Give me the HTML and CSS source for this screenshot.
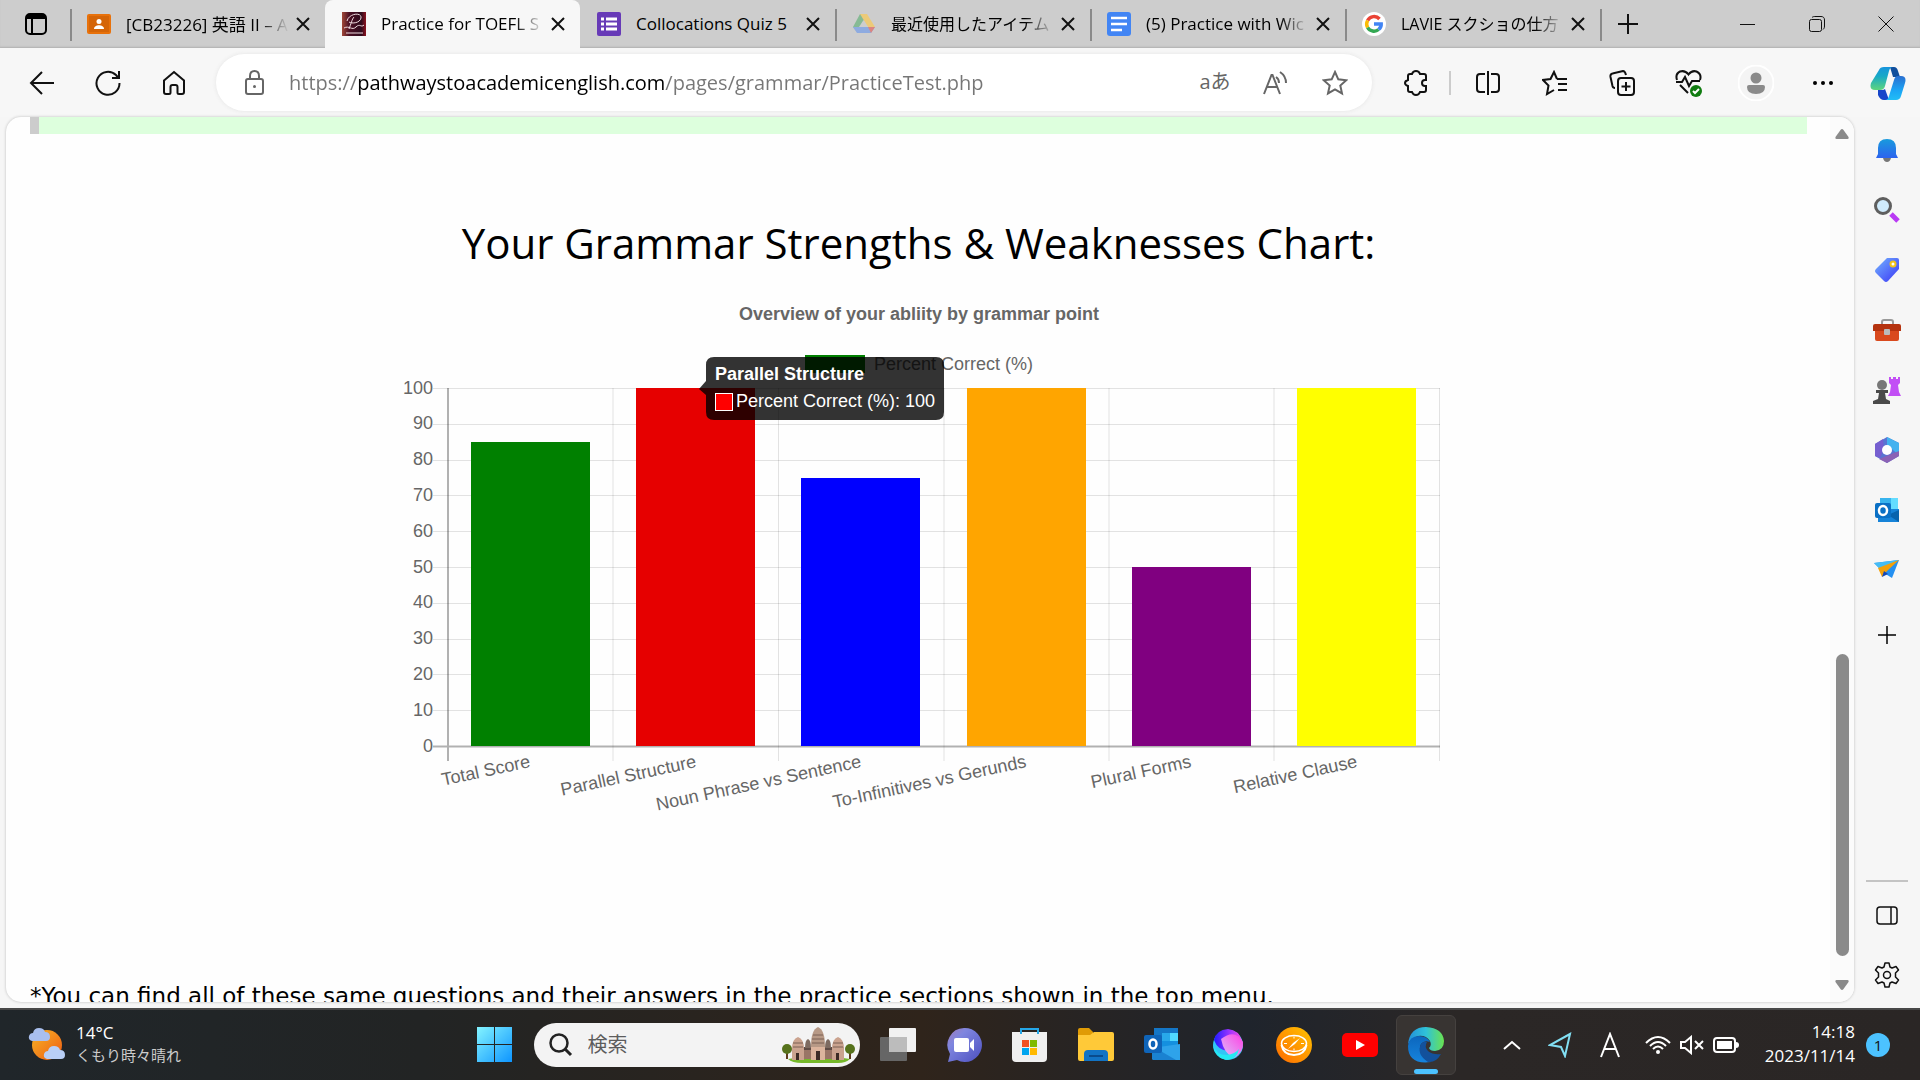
FILE: index.html
```html
<!DOCTYPE html>
<html lang="ja">
<head>
<meta charset="utf-8">
<title>Practice for TOEFL</title>
<link rel="stylesheet" href="styles.css">
</head>
<body>
<header class="tabbar">
  <button class="tab-actions" aria-label="Tab actions"><svg width="22" height="22" viewBox="0 0 22 22"><rect x="1" y="1" width="20" height="20" rx="4" fill="none" stroke="#000" stroke-width="2"/><path d="M1 6V5a4 4 0 0 1 4-4h12a4 4 0 0 1 4 4v1z"/><path d="M7 6v15" stroke="#000" stroke-width="2"/></svg></button>
  <nav class="tabs">
    <div class="tab">
      <svg width="24" height="24" viewBox="0 0 24 24"><rect y="2" width="24" height="20" rx="2" fill="#e8710a"/><rect x="2" y="4" width="20" height="16" fill="#d56507"/><circle cx="12" cy="9.500" r="2.500" fill="#fff"/><path d="M7 17c0-5 10-5 10 0z" fill="#fff"/></svg>
      <button class="tab-title">[CB23226] 英語 II – A</button>
      <button class="close" aria-label="Close tab"><svg width="14" height="14" viewBox="0 0 14 14"><path d="M1 1l12 12M13 1L1 13"/></svg></button>
    </div>
    <div class="tab active">
      <svg width="24" height="24" viewBox="0 0 24 24"><defs><linearGradient id="fav"><stop stop-color="#a14838"/><stop offset=".3" stop-color="#4b1024"/><stop offset=".8" stop-color="#2e0b1d"/><stop offset="1" stop-color="#8c1320"/></linearGradient></defs><rect width="24" height="24" fill="url(#fav)"/><path d="M7 17C9 12 10 7 12 5M5 9C7 1 20 0 19 6c-1 5-9 6-12 4M2 16c5-3 8 3 12-1s5 1 8-2M4 21h17" fill="none" stroke="#efdce0"/></svg>
      <button class="tab-title">Practice for TOEFL S</button>
      <button class="close" aria-label="Close tab"><svg width="14" height="14" viewBox="0 0 14 14"><path d="M1 1l12 12M13 1L1 13"/></svg></button>
    </div>
    <div class="tab">
      <svg width="24" height="24" viewBox="0 0 24 24"><rect width="24" height="24" rx="2" fill="#673ab7"/><path d="M4 7h3M4 12h3M4 17h3M9 7h11M9 12h11M9 17h11" stroke="#fff" stroke-width="3"/></svg>
      <button class="tab-title">Collocations Quiz 5</button>
      <button class="close" aria-label="Close tab"><svg width="14" height="14" viewBox="0 0 14 14"><path d="M1 1l12 12M13 1L1 13"/></svg></button>
    </div>
    <div class="tab">
      <svg width="24" height="24" viewBox="0 0 24 24"><path d="M8 2h7L6 21l-5-6z" fill="#86ba94"/><path d="M8 2h7l8 13h-7z" fill="#ecca78"/><path d="M1 15h22l-4 6H5z" fill="#8eabe0"/><path d="M16 15h7l-4 6z" fill="#dc8580"/><path d="M11.500 8L16 15H7z" fill="#cdcdcd"/></svg>
      <button class="tab-title kana">最近使用したアイテム</button>
      <button class="close" aria-label="Close tab"><svg width="14" height="14" viewBox="0 0 14 14"><path d="M1 1l12 12M13 1L1 13"/></svg></button>
    </div>
    <div class="tab">
      <svg width="24" height="24" viewBox="0 0 24 24"><rect width="24" height="24" rx="3" fill="#4285f4"/><path d="M4 6h16M4 12h16M4 18h11" stroke="#fff" stroke-width="2.500"/></svg>
      <button class="tab-title">(5) Practice with Wic</button>
      <button class="close" aria-label="Close tab"><svg width="14" height="14" viewBox="0 0 14 14"><path d="M1 1l12 12M13 1L1 13"/></svg></button>
    </div>
    <div class="tab">
      <svg width="24" height="24" viewBox="0 0 24 24"><circle cx="12" cy="12" r="12" fill="#fff"/><g fill="none" stroke-width="3.500"><path d="M17.500 7A7.300 7.300 0 0 0 5.600 8.500" stroke="#ea4335"/><path d="M5.600 8.500a7.300 7.300 0 0 0 0 7" stroke="#fbbc05"/><path d="M5.600 15.500a7.300 7.300 0 0 0 11 2" stroke="#34a853"/><path d="M16.600 17.500c2-1.700 2.700-3.500 2.600-5.500H12" stroke="#4285f4"/></g></svg>
      <button class="tab-title kana">LAVIE スクショの仕方</button>
      <button class="close" aria-label="Close tab"><svg width="14" height="14" viewBox="0 0 14 14"><path d="M1 1l12 12M13 1L1 13"/></svg></button>
    </div>
  </nav>
  <button class="new-tab" aria-label="New tab"><svg width="22" height="22" viewBox="0 0 22 22"><path d="M11 1v20M1 11h20"/></svg></button>
  <div class="window-buttons">
    <button aria-label="Minimize"><svg width="16" height="16" viewBox="0 0 16 16"><path d="M0 8.500h15"/></svg></button>
    <button aria-label="Restore"><svg width="16" height="16" viewBox="0 0 16 16"><rect x=".5" y="3.500" width="12" height="12" rx="2"/><path d="M3 1.500C4 .5 5 .5 6 .5h6c2 0 3.500 1 3.500 3.500v6c0 2-.5 2.500-1.500 3.500"/></svg></button>
    <button aria-label="Close"><svg width="16" height="16" viewBox="0 0 16 16"><path d="M.5.5l15 15M15.500.5l-15 15"/></svg></button>
  </div>
</header>

<div class="toolbar">
  <button class="tool" aria-label="Back"><svg width="26" height="24" viewBox="0 0 26 24"><path d="M25 12H2M13 1L2 12l11 11"/></svg></button>
  <button class="tool" aria-label="Refresh"><svg width="26" height="26" viewBox="0 0 26 26"><path d="M24.500 13A11.500 11.500 0 1 1 21 5l2.500 3M24 1v7h-7"/></svg></button>
  <button class="tool" aria-label="Home"><svg width="24" height="26" viewBox="0 0 24 26"><path d="M2 10.500L12 2l10 8.500V22q0 2-2 2h-3q-1.500 0-1.500-1.500V17q0-2-2-2h-3q-2 0-2 2v5.500Q8.500 24 7 24H4q-2 0-2-2z"/></svg></button>
  <div class="address">
    <svg class="lock" width="20" height="26" viewBox="0 0 20 26"><rect x="1" y="9" width="17" height="15" rx="2"/><path d="M5 9V6q0-5 4.500-5T14 6v3"/><circle cx="9.500" cy="16.500" r="1.500" fill="#666" stroke="none"/></svg>
    <input class="url" aria-label="Address" value="https://pathwaystoacademicenglish.com/pages/grammar/PracticeTest.php">
    <button class="translate" aria-label="Translate">aあ</button>
    <button aria-label="Read aloud"><svg width="24" height="24" viewBox="0 0 24 24"><path d="M1 23L8.500 4h1L17 23M4 16h10M13 6q3 2 3 6M17 1q6 4 6 11"/></svg></button>
    <button aria-label="Add to favorites"><svg width="26" height="26" viewBox="0 0 26 26"><path d="M13 2l3.300 7.300 8 .9-6 5.300 1.700 7.900-7-4-7 4 1.700-7.900-6-5.300 8-.9z"/></svg></button>
  </div>
  <button class="tool" aria-label="Extensions"><svg width="24" height="26" viewBox="0 0 24 26"><path d="M8 4q1-3 4-3t4 3h4q2 0 2 2v4h-1q-3 0-3 3t3 3h1v4q0 2-2 2h-4q-1 3-4 3t-4-3H6q-2 0-2-2v-4q-3-1-3-3t3-3V6q0-2 2-2z"/></svg></button>
  <span class="divider"></span>
  <button class="tool wide" aria-label="Split screen"><svg width="26" height="26" viewBox="0 0 26 26"><path d="M13 1v24M10 4H5Q2 4 2 7v12q0 3 3 3h5M16 4h5q3 0 3 3v12q0 3-3 3h-5"/></svg></button>
  <button class="tool wide" aria-label="Favorites"><svg width="26" height="26" viewBox="0 0 26 26"><path d="M15 9l-3-7-3.500 7-7.500 1 5.500 5.500L5 24l7-4M15 9h10M16 14h9M16 20h9"/></svg></button>
  <button class="tool wide" aria-label="Collections"><svg width="26" height="26" viewBox="0 0 26 26"><rect x="9" y="8" width="16" height="17" rx="3"/><path d="M17 12v9M12.500 16.500h9M6 18q-2 0-2.500-2L1.500 7q-.5-3 2-3.500L14 1q2 0 3 4"/></svg></button>
  <button class="tool wide" aria-label="Browser essentials"><svg width="28" height="28" viewBox="0 0 28 28"><path d="M2 11Q0 5 5 2.500q5-1.500 8.500 3 3.500-4.500 8-3Q27 5 25 11M1 13h6l3-5 4 9 3-5h8M5 16l8 8"/><circle cx="21" cy="22" r="6" fill="#107c10" stroke="none"/><path d="M18 22l2 2 4-4" stroke="#fff"/></svg></button>
  <button class="tool wide" aria-label="Profile"><svg width="36" height="36" viewBox="0 0 36 36"><circle cx="18" cy="18" r="17.500" fill="#f4f4f4" stroke="#fff"/><circle cx="18" cy="13" r="5.500" fill="#8a8a8a" stroke="none"/><path d="M9 22q0-2 2-2h14q2 0 2 2 0 7-9 7t-9-7z" fill="#8a8a8a" stroke="none"/></svg></button>
  <button class="tool wide" aria-label="More"><svg width="22" height="6" viewBox="0 0 22 6"><g fill="#000" stroke="none"><circle cx="3" cy="3" r="2"/><circle cx="11" cy="3" r="2"/><circle cx="19" cy="3" r="2"/></g></svg></button>
  <button class="tool copilot" aria-label="Copilot"><svg width="36" height="34" viewBox="0 0 36 34"><defs><linearGradient id="cp1" x2="0" y2="1"><stop stop-color="#1794dc"/><stop offset=".4" stop-color="#17a9c7"/><stop offset="1" stop-color="#5fd57c"/></linearGradient><linearGradient id="cp2" x2="0" y2="1"><stop stop-color="#2a6fd0"/><stop offset=".6" stop-color="#1ba5f5"/><stop offset="1" stop-color="#22bdf5"/></linearGradient></defs><g stroke="none"><path d="M8 24h4q2 0 3-1l4 11h-5q-4 0-6-5z" fill="#1746c9"/><path d="M20 1h4q3 0 4 4l2 6h-7z" fill="#114f9d"/><path d="M28 10h3q6 0 4 7l-4 13q-1 4-5 4H15q3 0 4-4l5-16q1-4 4-4z" fill="url(#cp2)"/><path d="M9 4q1-3 5-3h9q-3 0-4 4l-4 15q-1 4-5 4H5q-6 0-4-7z" fill="url(#cp1)"/></g></svg></button>
</div>

<div class="workspace">
  <main class="page">
    <div class="content">
      <div class="answer-band"></div>
      <h1>Your Grammar Strengths &amp; Weaknesses Chart:</h1>
      <svg class="chart" viewBox="0 0 1045 600" role="img" aria-label="Overview of your abliity by grammar point">
        <text class="chart-title" x="523" y="30" text-anchor="middle">Overview of your abliity by grammar point</text>
        <rect x="409" y="65" width="60" height="18" fill="#008000"/>
        <text x="478" y="80">Percent Correct (%)</text>
        <g class="grid">
          <path d="M37 98.500h1007M37 134.500h1007M37 170.500h1007M37 205.500h1007M37 241.500h1007M37 277.500h1007M37 313.500h1007M37 349.500h1007M37 384.500h1007M37 420.500h1007"/>
          <path d="M217 98v373M382.500 98v373M548 98v373M713 98v373M878 98v373M1043.500 98v373"/>
          <path class="axis" d="M52 98v373M37 456.500h1007"/>
        </g>
        <g text-anchor="end">
          <text x="37" y="104">100</text><text x="37" y="139">90</text><text x="37" y="175">80</text><text x="37" y="211">70</text><text x="37" y="247">60</text><text x="37" y="283">50</text><text x="37" y="318">40</text><text x="37" y="354">30</text><text x="37" y="390">20</text><text x="37" y="426">10</text><text x="37" y="462">0</text>
        </g>
        <rect x="75" y="152" width="119" height="304" fill="#008000"/>
        <rect x="240" y="98" width="119" height="358" fill="#e60000"/>
        <rect x="405" y="188" width="119" height="268" fill="#0000ff"/>
        <rect x="571" y="98" width="119" height="358" fill="#ffa500"/>
        <rect x="736" y="277" width="119" height="179" fill="#800080"/>
        <rect x="901" y="98" width="119" height="358" fill="#ffff00"/>
        <g text-anchor="end">
          <text transform="translate(135 477) rotate(-12)">Total Score</text>
          <text transform="translate(301 477) rotate(-12)">Parallel Structure</text>
          <text transform="translate(466 477) rotate(-12)">Noun Phrase vs Sentence</text>
          <text transform="translate(631 477) rotate(-12)">To-Infinitives vs Gerunds</text>
          <text transform="translate(796 477) rotate(-12)">Plural Forms</text>
          <text transform="translate(962 477) rotate(-12)">Relative Clause</text>
        </g>
        <path d="M318 67h222q8 0 8 8v47q0 8-8 8H318q-8 0-8-8v-17l-7-6 7-8V75q0-8 8-8z" fill="#000" fill-opacity=".8"/>
        <text class="tip bold" x="319" y="90">Parallel Structure</text>
        <rect x="319.500" y="103.500" width="17" height="17" fill="#f00" stroke="#fff"/>
        <text class="tip" x="340" y="117">Percent Correct (%): 100</text>
      </svg>
      <p>*You can find all of these same questions and their answers in the practice sections shown in the top menu.</p>
    </div>
    <div class="scrollbar">
      <svg width="14" height="10" viewBox="0 0 14 10"><path d="M5.500 1q1.500-2 3 0L13.500 8q.5 2-1 2h-11Q0 10 .5 8z" fill="#8a8a8a"/></svg>
      <div class="thumb"></div>
      <svg width="14" height="10" viewBox="0 0 14 10"><path d="M5.500 9q1.500 2 3 0L13.500 2q.5-2-1-2h-11Q0 0 .5 2z" fill="#8a8a8a"/></svg>
    </div>
  </main>

  <aside class="sidebar">
    <button aria-label="Notifications"><svg width="28" height="28" viewBox="0 0 28 28"><defs><linearGradient id="bell" x2="0" y2="1"><stop stop-color="#189bdd"/><stop offset="1" stop-color="#2d63ee"/></linearGradient></defs><path d="M10 22h8q-1 4-4 4t-4-4z" fill="#777"/><path d="M5 12q0-9 9-9t9 9v6l2 4H3l2-4z" fill="url(#bell)"/></svg></button>
    <button aria-label="Search"><svg width="28" height="28" viewBox="0 0 28 28"><path d="M18 18l7 7" stroke="#b93af4" stroke-width="5"/><circle cx="10" cy="10" r="7.500" fill="#cfeafb" stroke="#5e5e5e" stroke-width="3"/></svg></button>
    <button aria-label="Shopping"><svg width="28" height="28" viewBox="0 0 28 28"><defs><linearGradient id="tag" x2="1" y2="1"><stop stop-color="#74b4ff"/><stop offset="1" stop-color="#3a35f5"/></linearGradient></defs><path d="M14 2h10q2 0 2 2v9L15 25q-2 2-4 0l-8-8q-2-2 0-4z" fill="url(#tag)"/><circle cx="20" cy="8" r="2.500" fill="#fff" stroke="#f3c316" stroke-width="2"/></svg></button>
    <button aria-label="Tools"><svg width="28" height="28" viewBox="0 0 28 28"><path d="M9 9V6q0-2 2-2h7q2 0 2 2v3" fill="none" stroke="#999" stroke-width="2"/><path d="M2 13h24v10q0 2-2 2H4q-2 0-2-2z" fill="#d9491d"/><path d="M0 10q0-2 2-2h24q2 0 2 2v5H0z" fill="#b5330f"/><rect x="11" y="13" width="6" height="6" rx="1" fill="#bbb"/></svg></button>
    <button aria-label="Games"><svg width="28" height="28" viewBox="0 0 28 28"><path d="M16 1h2v2h2V1h3v2h2V1h2v6l-2 2 1 7 2 4H15l2-4 1-7-2-2z" fill="#c24ff5"/><circle cx="9" cy="9" r="5" fill="#777"/><path d="M3 14h12v3h-3l1 6 4 2v3H0v-3l5-2 1-6H3z" fill="#4a4a4a"/></svg></button>
    <button aria-label="Microsoft 365"><svg width="28" height="28" viewBox="0 0 28 28"><path d="M14 1l12 6v13l-12 7-12-7V8z" fill="#5a74d2"/><path d="M14 1l12 6v12L14 9z" fill="#43b2ef"/><path d="M26 15v5l-12 7-8-4 10-4z" fill="#8b62b5"/><path d="M10 3L2 8v12l5 2 4-9z" fill="#765fd0"/><circle cx="14" cy="14" r="5" fill="#fff"/></svg></button>
    <button aria-label="Outlook"><svg width="28" height="28" viewBox="0 0 28 28"><path d="M7 2h18v12H7z" fill="#38b4ee"/><path d="M18 2h7v12h-7z" fill="#64dcff"/><path d="M5 13h21v13H5z" fill="#1683d8"/><path d="M26 14v12L15 19z" fill="#0863ad"/><rect x="2" y="7" width="16" height="15" rx="2" fill="#0a70c5"/><ellipse cx="10" cy="14.500" rx="4" ry="4.500" fill="none" stroke="#fff" stroke-width="2.500"/></svg></button>
    <button aria-label="Drop"><svg width="28" height="28" viewBox="0 0 28 28"><path d="M1 7l25-3-7 18-8-5z" fill="#2490f1"/><path d="M1 7l25-3-19 9z" fill="#45bdf5"/><path d="M5 12l21-8-12 11-5 6z" fill="#f4a10a"/><path d="M9 21l2-6 4 3z" fill="#1547b8"/></svg></button>
    <button aria-label="Customize" class="add"><svg width="28" height="28" viewBox="0 0 28 28"><path d="M14 5v18M5 14h18" stroke="#000" stroke-width="1.500"/></svg></button>
    <div class="side-foot">
      <button aria-label="Toggle sidebar"><svg width="28" height="28" viewBox="0 0 28 28"><rect x="4" y="6" width="20" height="17" rx="3" fill="none" stroke="#111" stroke-width="1.500"/><path d="M18 6v17" stroke="#111" stroke-width="1.500"/></svg></button>
      <button aria-label="Settings"><svg width="28" height="28" viewBox="0 0 28 28"><path d="M12 2h4l1 4 2 1 4-1.500 2.500 3.500-3 3v4l3 3L23 22.500 19 21l-2 1-1 4h-4l-1-4-2-1-4 1.500L2.500 19l3-3v-4l-3-3L5 5.500 9 7l2-1z" fill="none" stroke="#111" stroke-width="1.500" stroke-linejoin="round"/><circle cx="14" cy="14" r="3.500" fill="none" stroke="#111" stroke-width="1.500"/></svg></button>
    </div>
  </aside>
</div>

<footer class="taskbar">
  <button class="weather">
    <svg width="38" height="36" viewBox="0 0 38 36"><defs><linearGradient id="sun" x2="1" y2="1"><stop stop-color="#f7b526"/><stop offset="1" stop-color="#ee5a12"/></linearGradient></defs><circle cx="19" cy="19" r="15" fill="url(#sun)"/><path d="M4 15q-4-1-3-5 1-3 4-3 1-5 6-5t6 4q5 0 5 5 0 4-4 4z" fill="#a9bfee"/><path d="M19 33q-4-1-3-5 1-3 4-3 1-5 6-5t6 4q5 0 5 5 0 4-4 4z" fill="#b9cff6"/></svg>
    <span class="weather-text"><span>14°C</span><span class="muted">くもり時々晴れ</span></span>
  </button>
  <div class="apps">
    <button class="app" aria-label="Start"><svg width="36" height="36" viewBox="0 0 36 36"><defs><linearGradient id="win" gradientUnits="userSpaceOnUse" x1="0" y1="0" x2="36" y2="36"><stop stop-color="#84f4ff"/><stop offset="1" stop-color="#0a92ff"/></linearGradient></defs><path d="M0 0h17v17H0zM18 0h17v17H18zM0 18h17v17H0zM18 18h17v17H18z" fill="url(#win)"/></svg></button>
    <label class="search">
      <svg width="24" height="24" viewBox="0 0 24 24"><circle cx="10" cy="10" r="8.500" fill="none" stroke="#222" stroke-width="2.500"/><path d="M16 16l6 6" stroke="#222" stroke-width="3"/></svg>
      <input aria-label="検索" placeholder="検索">
      <svg width="74" height="38" viewBox="0 0 74 38"><path d="M6 33q31-6 62 0-4 4-12 4H20q-10 0-14-4z" fill="#76b82a"/><path d="M12 22h50v11H12z" fill="#9a7566"/><path d="M12 21h50v3H12z" fill="#5d4a44"/><path d="M29 33V20q0-16 7-19 7 3 7 19v13z" fill="#b79986"/><path d="M31 9h10M30 13h12M30 17h12" stroke="#7b6154"/><path d="M29 21h14v13H29z" fill="#dcb49d"/><path d="M34 25h4v9h-4z" fill="#3d2b26"/><path d="M10 34V23q0-10 6-12 6 2 6 12v11zM50 34V23q0-10 6-12 6 2 6 12v11z" fill="#cba38f"/><path d="M11 17h10M11 21h10M51 17h10M51 21h10" stroke="#7b6154"/><path d="M14 27h3v7h-3zM54 27h3v7h-3z" fill="#3d2b26"/><path d="M23 22q0-8 3-9 3 1 3 9zM43 22q0-8 3-9 3 1 3 9z" fill="#7d6a60"/><path d="M4 26h2v7H4zM67 26h2v7h-2z" fill="#5d3b1a"/><ellipse cx="5" cy="23" rx="5" ry="5" fill="#56721c"/><ellipse cx="68" cy="23" rx="5" ry="5" fill="#56721c"/></svg>
    </label>
    <button class="app" aria-label="Task view"><svg width="36" height="36" viewBox="0 0 36 36"><rect x="9" y="1" width="27" height="24" rx="1" fill="#f1f1f1"/><rect y="10" width="27" height="24" rx="1" fill="#666"/><path d="M9 10h18v15H9z" fill="#bcbcbc"/></svg></button>
    <button class="app" aria-label="Chat"><svg width="36" height="36" viewBox="0 0 36 36"><defs><linearGradient id="chat" x2="1" y2="1"><stop stop-color="#a17ab8"/><stop offset=".3" stop-color="#7f86df"/><stop offset="1" stop-color="#4c4fc0"/></linearGradient></defs><path d="M18 1a17 17 0 1 1-7 32l-9 2 2-8A17 17 0 0 1 18 1z" fill="url(#chat)"/><rect x="8" y="11" width="15" height="14" rx="2" fill="#fff"/><path d="M24 16l4-4v12l-4-4z" fill="#fff"/></svg></button>
    <button class="app" aria-label="Microsoft Store"><svg width="36" height="36" viewBox="0 0 36 36"><path d="M0 5h35v26q0 4-4 4H4q-4 0-4-4z" fill="#efefef"/><path d="M9 7V2h17v5" fill="none" stroke="#25a7e8" stroke-width="2"/><path d="M10 13h7v7h-7z" fill="#f25022"/><path d="M18 13h7v7h-7z" fill="#7fba00"/><path d="M10 21h7v7h-7z" fill="#00a4ef"/><path d="M18 21h7v7h-7z" fill="#ffb900"/></svg></button>
    <button class="app" aria-label="Explorer"><svg width="36" height="36" viewBox="0 0 36 36"><path d="M0 3q0-2 2-2h9l4 4v8H0z" fill="#e09b05"/><path d="M0 8h12l4-3h18q2 0 2 2v25q0 2-2 2H2q-2 0-2-2z" fill="#ffc938"/><path d="M6 34V27q0-4 4-4h16q4 0 4 4v7z" fill="#1273c4"/><path d="M11 29h14" stroke="#0a4b8c" stroke-width="2"/></svg></button>
    <button class="app" aria-label="Outlook"><svg width="36" height="36" viewBox="0 0 36 36"><path d="M10 1h24v20H10z" fill="#1476c6"/><path d="M18 6h8v8h-8z" fill="#28a8ea"/><path d="M26 6h8v8h-8z" fill="#50d9ff"/><path d="M18 14h16v8H18z" fill="#1490df"/><path d="M8 21l28-4v16H10q-2 0-2-2z" fill="#2ea3ea"/><path d="M8 19l24 14H10q-2 0-2-2z" fill="#1a82d1"/><rect y="8" width="18" height="18" rx="2" fill="#0f64b8"/><ellipse cx="9" cy="17" rx="3.500" ry="4.500" fill="none" stroke="#fff" stroke-width="2.500"/></svg></button>
    <button class="app" aria-label="Assistant"><svg width="36" height="36" viewBox="0 0 36 36"><defs><linearGradient id="as1"><stop stop-color="#1f1bff"/><stop offset=".6" stop-color="#a636ff"/><stop offset="1" stop-color="#ff4fd8"/></linearGradient><linearGradient id="as2" x1="1" x2="0" y2="1"><stop stop-color="#ff3fe4"/><stop offset="1" stop-color="#d9c3fb"/></linearGradient></defs><circle cx="18" cy="18" r="15" fill="#31c6f6"/><path d="M4 13Q6 3 18 2q11 1 14 12L19 24Q8 24 4 13z" fill="url(#as1)"/><path d="M11 12Q25 1 33 15q1 10-9 16-10-4-13-19z" fill="url(#as2)"/><path d="M3 18q3 10 14 10 8-1 12-6-2 11-13 11Q5 31 3 18z" fill="#24eaf2"/></svg></button>
    <button class="app" aria-label="Compass"><svg width="36" height="36" viewBox="0 0 36 36"><defs><linearGradient id="cmp" x1="1" x2="0" y2="1"><stop stop-color="#ffc400"/><stop offset="1" stop-color="#ff6a00"/></linearGradient></defs><circle cx="18" cy="18" r="18" fill="url(#cmp)"/><ellipse cx="18" cy="16.500" rx="12.500" ry="8" fill="none" stroke="#fff" stroke-width="1.500"/><path d="M5.500 18q2 10 12.500 10t12.500-10" fill="none" stroke="#fff" stroke-width="2"/><path d="M24 11l-5 6-7 5 5-6z" fill="#fff"/><path d="M8 16.500h3M25 16.500h3M18 9.500v2M18 21.500v2" stroke="#fff"/></svg></button>
    <button class="app" aria-label="YouTube"><svg width="36" height="36" viewBox="0 0 36 36"><rect y="6" width="36" height="24" rx="5" fill="#f00"/><path d="M14 13v10l9-5z" fill="#fff"/></svg></button>
    <button class="app current" aria-label="Edge"><svg width="36" height="36" viewBox="0 0 36 36"><defs><linearGradient id="eg1"><stop stop-color="#238fd8"/><stop offset=".5" stop-color="#2fc2d9"/><stop offset="1" stop-color="#6ae350"/></linearGradient><linearGradient id="eg2" x2="0" y2="1"><stop stop-color="#0c66bd"/><stop offset="1" stop-color="#1684dd"/></linearGradient></defs><path d="M0 17Q2 0 18 0q17 1 18 14 0 9-9 10-5 0-6-3 3-3 1-7-4-6-12-5Q3 11 0 17z" fill="url(#eg1)"/><path d="M0 19Q1 9 11 9q8 0 11 6-6-2-9 2-3 6 2 12 4 5 8 6-23 3-23-16z" fill="url(#eg2)"/><path d="M13 17q2-3 6-2-3 5 1 9 5 4 13 3-5 9-13 8-12-8-7-18z" fill="#13519c"/></svg></button>
  </div>
  <div class="tray">
    <button class="up" aria-label="Hidden icons"><svg width="18" height="10" viewBox="0 0 18 10"><path d="M1 9l8-7 8 7" stroke="#fff" stroke-width="2"/></svg></button>
    <svg width="24" height="26" viewBox="0 0 24 26"><path d="M22 2L2 13l11 2 4 9z" stroke="#82dff3" stroke-width="2"/></svg>
    <button class="ime" aria-label="IME"><svg width="20" height="26" viewBox="0 0 20 26"><path d="M1 25L10 2l9 23M4 17h12" stroke="#fff" stroke-width="2"/></svg></button>
    <button class="status" aria-label="Network, sound and battery">
      <svg width="26" height="20" viewBox="0 0 26 20"><g stroke="#fff" stroke-width="2"><path d="M1 8Q13-4 25 8M5 11q8-8 16 0M8 14q5-5 10 0"/></g><circle cx="13" cy="17" r="2" fill="#fff"/></svg>
      <svg width="24" height="20" viewBox="0 0 24 20"><path d="M1 7h4l6-5v16l-6-5H1zM15 6l8 8M23 6l-8 8" stroke="#fff" stroke-width="2"/></svg>
      <svg width="26" height="18" viewBox="0 0 26 18"><rect x="1" y="2" width="21" height="14" rx="3" stroke="#fff" stroke-width="2"/><rect x="4" y="5" width="15" height="8" fill="#fff"/><path d="M23 6q3 0 3 3t-3 3z" fill="#fff"/></svg>
    </button>
    <button class="clock"><span>14:18</span><span>2023/11/14</span></button>
    <button class="badge">1</button>
  </div>
</footer>
</body>
</html>
```
FILE: styles.css
```css
* { box-sizing: border-box; }
body {
  margin: 0;
  height: 100vh;
  display: flex;
  flex-direction: column;
  overflow: hidden;
  background: #f6f6f6;
  color: #000;
  font-family: "Open Sans", "Noto Sans CJK JP", sans-serif;
}
button, input {
  margin: 0;
  padding: 0;
  border: 0;
  background: none;
  color: inherit;
  font: inherit;
}
button {
  display: flex;
  align-items: center;
  justify-content: center;
  flex-shrink: 0;
}
svg { display: block; flex-shrink: 0; }

/* Tab strip */
.tabbar {
  display: flex;
  height: 48px;
  flex-shrink: 0;
  background: #cdcdcd;
  box-shadow: inset 0 -2px 2px -1px #b0b0b0;
}
.tab-actions { width: 70px; padding-left: 2px; }
.tabs { display: flex; }
.tab {
  display: flex;
  align-items: center;
  width: 255px;
  padding: 0 14px 0 15px;
  border-left: 2px solid transparent;
  border-image: linear-gradient(transparent 10px, #8a8a8a 10px 40px, transparent 40px) 1;
}
.tab.active {
  background: #f7f7f7;
  border-image: none;
  border-radius: 8px 8px 0 0;
}
.tab.active + .tab { border-image: none; }
.tab-title {
  flex: 1;
  min-width: 0;
  margin: 0 6px 2px 15px;
  overflow: hidden;
  justify-content: flex-start;
  white-space: nowrap;
  font-size: 17px;
  mask-image: linear-gradient(90deg, #000 82%, transparent);
}
.tab-title.kana { font-size: 16px; }
.tab:nth-child(3) .tab-title { mask-image: none; }
.close { width: 16px; }
.close svg { fill: none; stroke: #111; stroke-width: 2; }
.new-tab {
  width: 54px;
  border-left: 2px solid transparent;
  border-image: linear-gradient(transparent 10px, #8a8a8a 10px 40px, transparent 40px) 1;
}
.new-tab svg, .window-buttons svg { fill: none; stroke: #111; stroke-width: 1; }
.new-tab svg { stroke-width: 2; }
.window-buttons { display: flex; margin-left: auto; }
.window-buttons button { width: 69px; }

/* Toolbar */
.toolbar {
  display: flex;
  align-items: center;
  height: 69px;
  flex-shrink: 0;
  padding-left: 9px;
  background: #f7f7f7;
}
.tool { width: 66px; height: 48px; }
.tool.wide { width: 67px; }
.tool.copilot { width: 64px; }
.tool svg { fill: none; stroke: #111; stroke-width: 2; }
.address {
  display: flex;
  align-items: center;
  flex: 1;
  height: 57px;
  margin: 0 11px 0 9px;
  padding: 0 7px 0 29px;
  border-radius: 29px;
  background: #fff;
  box-shadow: 0 0 4px #e4e4e4;
}
.address svg { fill: none; stroke: #666; stroke-width: 2; }
.address button { width: 60px; }
.url {
  flex: 1;
  min-width: 0;
  margin-left: 24px;
  font-size: 20px;
  color: transparent;
  background: linear-gradient(90deg, #767676 68px, #000 68px 376px, #767676 376px);
  background-clip: text;
}
.address .translate { padding-bottom: 4px; font-size: 20px; color: #666; }
.divider { width: 5px; height: 24px; border-left: 2px solid #ccc; border-right: 3px solid transparent; }

/* Page */
.workspace { display: flex; flex: 1; min-height: 0; }
.page {
  display: flex;
  flex: 1;
  min-width: 0;
  margin: 0 0 6px 6px;
  overflow: hidden;
  border-radius: 15px;
  background: #fefefe;
  box-shadow: 0 0 3px #bbb;
}
.content { flex: 1; min-width: 0; padding: 0 23px 0 24px; }
.answer-band { height: 17px; border-left: 9px solid #ccc; background: #dfd; }
h1 {
  margin: 79px 0 17px;
  text-align: center;
  font-size: 42px;
  line-height: 60px;
  font-weight: 400;
}
.chart {
  width: 1045px;
  margin: 0 auto;
  font-family: "Liberation Sans", Arial, sans-serif;
  font-size: 18px;
  fill: #666;
}
.chart-title, .bold { font-weight: 700; }
.tip { fill: #fff; }
.grid { fill: none; stroke: #000; stroke-opacity: .11; }
.grid .axis { stroke-opacity: .3; stroke-width: 2; }
p {
  margin: 90px 0 0;
  font: 23px/32px "DejaVu Sans", Verdana, sans-serif;
  white-space: nowrap;
}
.scrollbar {
  display: flex;
  flex-direction: column;
  align-items: center;
  justify-content: space-between;
  width: 24px;
  padding: 12px 0;
  background: #fbfbfb;
}
.thumb { width: 13px; height: 302px; margin: auto 0 24px; border-radius: 7px; background: #8a8a8a; }

/* Sidebar */
.sidebar { display: flex; flex-direction: column; width: 66px; padding-top: 3px; }
.sidebar button { height: 60px; }
.sidebar .add { height: 70px; }
.side-foot { margin: auto 12px 3px; border-top: 2px solid #c4c4c4; padding-top: 3px; }
.side-foot button { width: 100%; }

/* Taskbar */
.taskbar {
  display: grid;
  grid-template-columns: 1fr auto 1fr;
  height: 72px;
  flex-shrink: 0;
  padding-bottom: 1px;
  border-top: 2px solid #484848;
  background: linear-gradient(90deg, #20262a, #222424 22%, #2f241b 48%, #1f242c 65%, #2b2726 76%, #2a2625);
  color: #fff;
}
.weather { justify-self: start; gap: 10px; padding: 0 0 2px 28px; font-size: 17px; line-height: 23px; }
.weather-text { display: flex; flex-direction: column; text-align: left; }
.muted { font-size: 15px; color: #ccc; }
.apps { display: flex; align-items: center; }
.app { width: 60px; height: 60px; margin: 0 3px; border-radius: 6px; }
.app.current { background: #383432; border: 1px solid #45413f; position: relative; }
.app.current::after {
  content: "";
  position: absolute;
  bottom: 0;
  width: 24px;
  height: 5px;
  border-radius: 3px;
  background: #4cc2ff;
}
.search {
  display: flex;
  align-items: center;
  width: 326px;
  height: 44px;
  margin: 0 5px 0 6px;
  padding: 0 4px 0 15px;
  border-radius: 22px;
  background: #f3f3f3;
}
.search input { flex: 1; min-width: 0; margin-left: 15px; font-size: 20px; color: #222; }
.search input::placeholder { color: #5c5c5c; opacity: 1; }
.tray { display: flex; align-items: center; justify-content: flex-end; padding-right: 30px; }
.tray svg { fill: none; }
.up { margin-right: 27px; }
.ime { margin: 0 25px 0 28px; }
.status { gap: 9px; }
.clock {
  flex-direction: column;
  align-items: flex-end;
  width: 104px;
  margin: 0 11px 0 12px;
  padding-bottom: 2px;
  font-size: 17px;
  line-height: 24px;
}
.badge { width: 24px; height: 24px; border-radius: 50%; background: #4cc2ff; color: #111; font-size: 15px; }
```
